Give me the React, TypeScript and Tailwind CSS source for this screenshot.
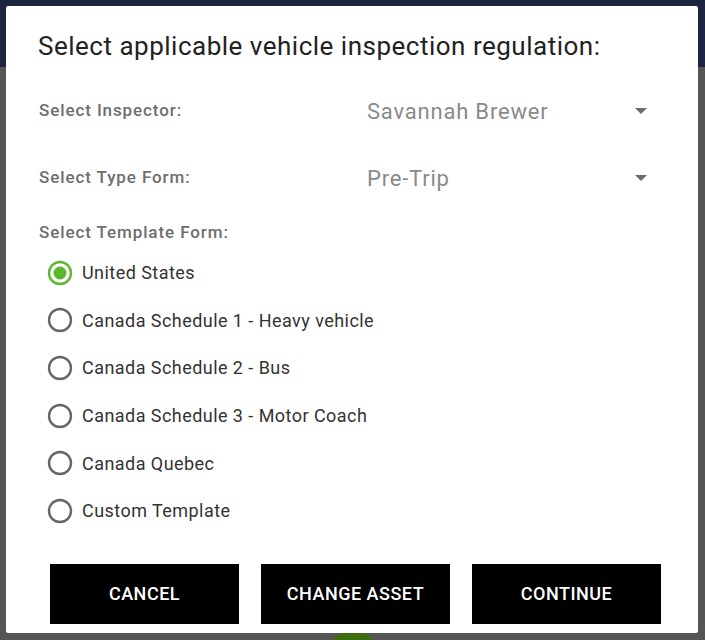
import React from "react";

const templates = [
  "United States",
  "Canada Schedule 1 - Heavy vehicle",
  "Canada Schedule 2 - Bus",
  "Canada Schedule 3 - Motor Coach",
  "Canada Quebec",
  "Custom Template",
];

function Radio({ checked }: { checked: boolean }) {
  return (
    <svg width="26" height="26" viewBox="0 0 26 26" className="shrink-0">
      <circle
        cx="13"
        cy="13"
        r="11"
        fill="none"
        stroke={checked ? "#5cb82b" : "#666666"}
        strokeWidth="2.4"
      />
      {checked && <circle cx="13" cy="13" r="6.5" fill="#5cb82b" />}
    </svg>
  );
}

function Caret() {
  return (
    <svg width="12" height="6" viewBox="0 0 12 6">
      <path d="M0 0 L12 0 L6 6 Z" fill="#6b6b6b" />
    </svg>
  );
}

function SelectRow({ label, value }: { label: string; value: string }) {
  return (
    <div className="flex h-[48px] items-center pl-[33px] pr-[51px]">
      <div className="w-[328px] text-[17px] font-medium tracking-[0.9px] text-[#6e6e6e]">{label}</div>
      <div className="flex-1 text-[22px] tracking-[0.8px] text-[#8a8a8a]">{value}</div>
      <Caret />
    </div>
  );
}

export default function App() {
  const [selected, setSelected] = React.useState(0);

  return (
    <div
      className="relative h-[640px] w-[705px] overflow-hidden bg-[#555555]"
      style={{ fontFamily: "Roboto, 'Noto Sans', sans-serif" }}
    >
      {/* backdrop */}
      <div className="flex h-full flex-col">
        <div className="h-[67px] bg-[#1b2540]" />
        <div className="flex flex-1 items-end justify-center">
          <div className="mb-[-40px] h-[50px] w-[50px] rounded-full bg-[#3c6e10]" />
        </div>
      </div>

      {/* dialog */}
      <div className="absolute left-[6px] top-[6px] flex h-[627px] w-[692px] flex-col rounded-[2px] bg-white">
        <h1 className="pl-[32px] pt-[24px] text-[26px] leading-[32px] font-normal tracking-[0.5px] text-[#222222]">
          Select applicable vehicle inspection regulation:
        </h1>

        <div className="mt-[25px]">
          <SelectRow label="Select Inspector:" value="Savannah Brewer" />
        </div>
        <div className="mt-[19px]">
          <SelectRow label="Select Type Form:" value="Pre-Trip" />
        </div>

        <div className="mt-[18px] pl-[33px] text-[17px] leading-[24px] font-medium tracking-[0.9px] text-[#6e6e6e]">
          Select Template Form:
        </div>

        <div className="mt-[5px] flex flex-col">
          {templates.map((t, i) => (
            <label
              key={t}
              className="flex h-[47.6px] cursor-pointer items-center gap-[9px] pl-[41px]"
              onClick={() => setSelected(i)}
            >
              <Radio checked={selected === i} />
              <span className="text-[18px] tracking-[0.45px] text-[#333333]">{t}</span>
            </label>
          ))}
        </div>

        <div className="mt-[29px] flex gap-[22px] pl-[44px] pr-[37px]">
          {["CANCEL", "CHANGE ASSET", "CONTINUE"].map((b) => (
            <button
              key={b}
              className="flex h-[60px] flex-1 items-center justify-center bg-black text-[18px] font-medium tracking-[0.5px] text-white"
            >
              {b}
            </button>
          ))}
        </div>
      </div>
    </div>
  );
}
